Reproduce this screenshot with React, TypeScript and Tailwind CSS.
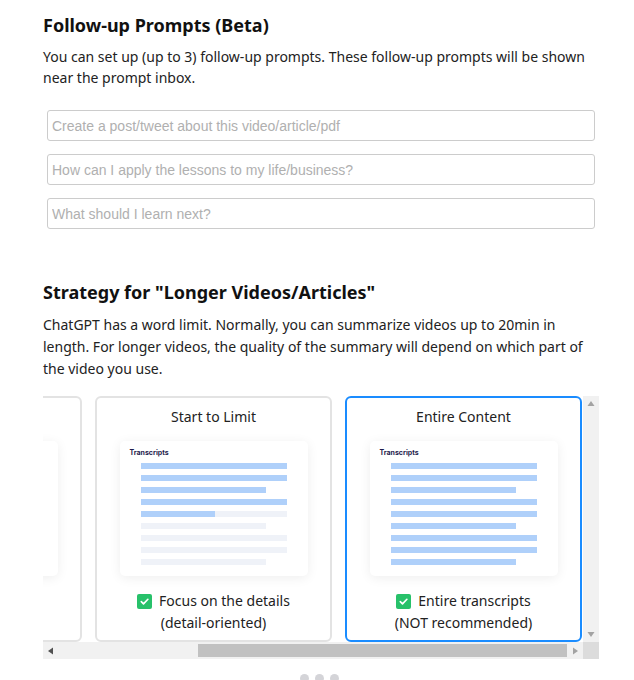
import React from "react";

const FONT = { fontFamily: '"Noto Sans", "Open Sans", sans-serif' };

type LineSpec = { w: "full" | "short"; blue: number };

function Preview({ lines }: { lines: LineSpec[] }) {
  return (
    <div className="mx-auto w-[188px] rounded-[5px] bg-white pt-[8px] pb-[11px] shadow-[0_2px_12px_rgba(0,0,0,0.07)]">
      <div
        className="pl-[10px] text-[7px] font-bold leading-[8px] text-[#1e1b4b]"
        style={{ fontFamily: '"Inter", "Liberation Sans", sans-serif' }}
      >
        Transcripts
      </div>
      <div className="mt-[6px] flex flex-col gap-[6px] pl-[21px]">
        {lines.map((l, i) => {
          const width = l.w === "full" ? 146 : 125;
          return (
            <div key={i} className="h-[6px] bg-[#eff2f8]" style={{ width }}>
              <div className="h-full bg-[#afd0fa]" style={{ width: l.blue >= 1 ? width : l.blue * 146 }} />
            </div>
          );
        })}
      </div>
    </div>
  );
}

function Check() {
  return (
    <span className="inline-flex h-[15px] w-[15px] items-center justify-center rounded-[2px] bg-[#27c16a]">
      <svg width="11" height="11" viewBox="0 0 12 12" fill="none">
        <path d="M2.5 6.2l2.4 2.4 4.8-5" stroke="white" strokeWidth="1.8" strokeLinecap="round" strokeLinejoin="round" />
      </svg>
    </span>
  );
}

function Card({
  title,
  lines,
  l1,
  l2,
  active,
}: {
  title: string;
  lines: LineSpec[];
  l1: string;
  l2: string;
  active?: boolean;
}) {
  return (
    <div
      className={
        "flex h-[246px] w-[237px] shrink-0 flex-col items-center rounded-[6px] bg-white " +
        (active ? "border-2 border-[#1a8cff]" : "border-2 border-[#e3e3e3]")
      }
    >
      <div className="mt-[9px] text-[14px] leading-[20px] text-[#222]" style={FONT}>
        {title}
      </div>
      <div className="mt-[14px] w-full">
        <Preview lines={lines} />
      </div>
      <div className="mt-[14px] flex items-center gap-[7px] text-[14px] leading-[22px] text-[#222]" style={FONT}>
        <Check />
        <span>{l1}</span>
      </div>
      <div className="text-[14px] leading-[22px] text-[#222]" style={FONT}>
        {l2}
      </div>
    </div>
  );
}

const startLines: LineSpec[] = [
  { w: "full", blue: 1 },
  { w: "full", blue: 1 },
  { w: "short", blue: 1 },
  { w: "full", blue: 1 },
  { w: "full", blue: 0.51 },
  { w: "short", blue: 0 },
  { w: "full", blue: 0 },
  { w: "full", blue: 0 },
  { w: "short", blue: 0 },
];
const entireLines: LineSpec[] = [
  { w: "full", blue: 1 },
  { w: "full", blue: 1 },
  { w: "short", blue: 1 },
  { w: "full", blue: 1 },
  { w: "full", blue: 1 },
  { w: "short", blue: 1 },
  { w: "full", blue: 1 },
  { w: "full", blue: 1 },
  { w: "short", blue: 1 },
];
const firstLines: LineSpec[] = [
  { w: "full", blue: 1 },
  { w: "full", blue: 1 },
  { w: "short", blue: 0 },
  { w: "full", blue: 0 },
  { w: "full", blue: 0 },
  { w: "short", blue: 0 },
  { w: "full", blue: 0 },
  { w: "full", blue: 0 },
  { w: "short", blue: 0 },
];

function Tri({ dir, color }: { dir: "up" | "down" | "left" | "right"; color: string }) {
  const pts = {
    up: "4,1 7.5,6 0.5,6",
    down: "0.5,2 7.5,2 4,7",
    left: "6,0.5 6,7.5 1,4",
    right: "2,0.5 2,7.5 7,4",
  }[dir];
  return (
    <svg width="8" height="8" viewBox="0 0 8 8">
      <polygon points={pts} fill={color} />
    </svg>
  );
}

export default function App() {
  const inputCls =
    "mx-1 block h-[31px] w-[548px] rounded-[3px] border border-[#cccccc] px-[4px] text-[14px] text-[#333] outline-none placeholder:text-[#b0b0b0]";
  const inputFont = { fontFamily: '"Liberation Sans", Arial, sans-serif' };

  return (
    <div className="min-h-[680px] w-[634px] overflow-hidden bg-white pl-[43px]" style={FONT}>
      <div className="w-[556px]">
        <h2 className="pt-[12px] text-[18px] font-bold leading-[26px] text-[#111]">Follow-up Prompts (Beta)</h2>
        <p className="mt-[8px] text-[14px] leading-[21px] text-[#222]">
          You can set up (up to 3) follow-up prompts. These follow-up prompts will be shown near the prompt inbox.
        </p>
        <div className="mt-[22px] flex flex-col gap-[13px]">
          <input className={inputCls} style={inputFont} placeholder="Create a post/tweet about this video/article/pdf" />
          <input className={inputCls} style={inputFont} placeholder="How can I apply the lessons to my life/business?" />
          <input className={inputCls} style={inputFont} placeholder="What should I learn next?" />
        </div>

        <h2 className="mt-[50px] text-[18px] font-bold leading-[26px] text-[#111]">
          Strategy for "Longer Videos/Articles"
        </h2>
        <p className="mt-[9px] text-[14px] leading-[22px] text-[#222]">
          ChatGPT has a word limit. Normally, you can summarize videos up to 20min in length. For longer videos, the
          quality of the summary will depend on which part of the video you use.
        </p>

        <div className="mt-[16px] grid w-[556px] grid-cols-[540px_16px] grid-rows-[246px_17px]">
          <div className="flex justify-end gap-[13px] overflow-hidden pr-[1px]">
            <Card title="Beginning" lines={firstLines} l1="Quick overview" l2="(time-saving)" />
            <Card title="Start to Limit" lines={startLines} l1="Focus on the details" l2="(detail-oriented)" />
            <Card title="Entire Content" lines={entireLines} l1="Entire transcripts" l2="(NOT recommended)" active />
          </div>
          <div className="flex flex-col items-center justify-between bg-[#f1f1f1] py-[4px]">
            <Tri dir="up" color="#a3a3a3" />
            <Tri dir="down" color="#a3a3a3" />
          </div>
          <div className="flex items-center bg-[#f1f1f1]">
            <div className="flex h-full w-[15px] items-center justify-center">
              <Tri dir="left" color="#505050" />
            </div>
            <div className="flex h-full flex-1 items-center justify-end">
              <div className="h-[13px] w-[369px] bg-[#c1c1c1]" />
            </div>
            <div className="flex h-full w-[16px] items-center justify-center">
              <Tri dir="right" color="#a3a3a3" />
            </div>
          </div>
          <div className="bg-[#dcdcdc]" />
        </div>

        <div className="mt-[15px] flex justify-center gap-[6px] pr-[4px]">
          <span className="h-[9px] w-[9px] rounded-full bg-[#d4d4d8]" />
          <span className="h-[9px] w-[9px] rounded-full bg-[#d4d4d8]" />
          <span className="h-[9px] w-[9px] rounded-full bg-[#d4d4d8]" />
        </div>
      </div>
    </div>
  );
}
